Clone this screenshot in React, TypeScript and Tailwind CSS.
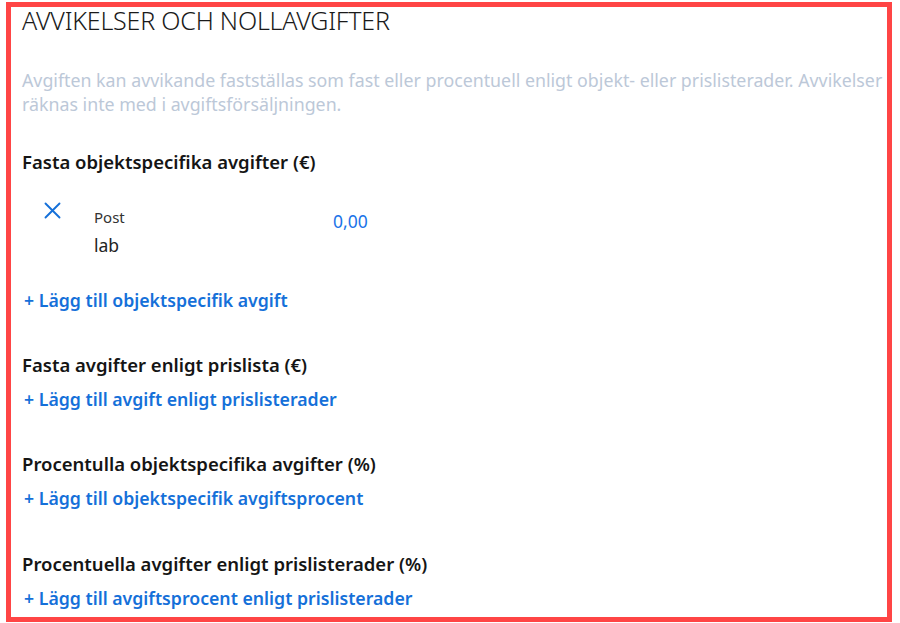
import React from "react";

const font = { fontFamily: '"Noto Sans", "Open Sans", Arial, sans-serif' };

function AddLink({ children }: { children: React.ReactNode }) {
  return (
    <a className="block pl-[2px] text-[17.7px] leading-[24px] font-semibold text-[#1570d9] cursor-pointer">
      + {children}
    </a>
  );
}

function Heading({ children }: { children: React.ReactNode }) {
  return <h3 className="text-[18.5px] leading-[24px] font-semibold text-[#151515]">{children}</h3>;
}

export default function App() {
  return (
    <div className="w-[900px] h-[623px] bg-white overflow-hidden" style={font}>
      <div className="ml-[6px] mt-[2px] w-[886px] h-[620px] border-[5px] border-[#ff4545] pl-[11px] pr-0 overflow-hidden">
        <h2 className="mt-[-3px] text-[25px] leading-[32px] font-light tracking-[-0.2px] text-[#1a1a1a]">
          AVVIKELSER OCH NOLLAVGIFTER
        </h2>
        <p className="mt-[32px] text-[17.8px] leading-[24px] text-[#bcc8d8]">
          Avgiften kan avvikande fastställas som fast eller procentuell enligt objekt- eller prislisterader. Avvikelser
          räknas inte med i avgiftsförsäljningen.
        </p>

        <div className="mt-[34px]">
          <Heading>Fasta objektspecifika avgifter (€)</Heading>
          <div className="mt-[19px] flex items-start">
            <button className="ml-[22px] mt-[9px] w-[17px] h-[17px] text-[#1570d9]">
              <svg viewBox="0 0 17 17" width="17" height="17" fill="none" stroke="currentColor" strokeWidth="1.9" strokeLinecap="round">
                <path d="M1.5 1.5 L15.5 15.5 M15.5 1.5 L1.5 15.5" />
              </svg>
            </button>
            <div className="ml-[33px] mt-[15px] w-[239px] flex flex-col">
              <span className="text-[15px] leading-[18px] text-[#333]">Post</span>
              <span className="mt-[8px] text-[17.5px] leading-[22px] text-[#222]">lab</span>
            </div>
            <span className="mt-[17px] text-[17.5px] leading-[22px] text-[#1a73e8]">0,00</span>
          </div>
          <div className="mt-[32px]">
            <AddLink>Lägg till objektspecifik avgift</AddLink>
          </div>
        </div>

        <div className="mt-[41px]">
          <Heading>Fasta avgifter enligt prislista (€)</Heading>
          <div className="mt-[10px]">
            <AddLink>Lägg till avgift enligt prislisterader</AddLink>
          </div>
        </div>

        <div className="mt-[41px]">
          <Heading>Procentulla objektspecifika avgifter (%)</Heading>
          <div className="mt-[10px]">
            <AddLink>Lägg till objektspecifik avgiftsprocent</AddLink>
          </div>
        </div>

        <div className="mt-[42px]">
          <Heading>Procentuella avgifter enligt prislisterader (%)</Heading>
          <div className="mt-[10px]">
            <AddLink>Lägg till avgiftsprocent enligt prislisterader</AddLink>
          </div>
        </div>
      </div>
    </div>
  );
}
